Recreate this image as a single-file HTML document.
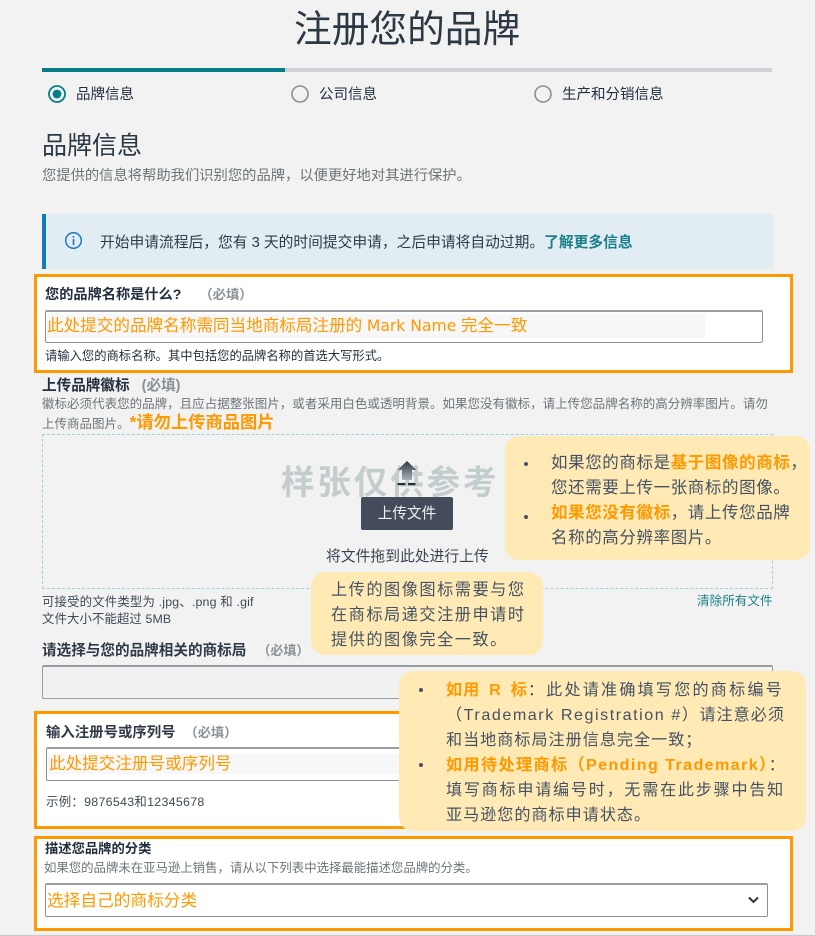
<!DOCTYPE html>
<html lang="zh-CN">
<head>
<meta charset="utf-8">
<title>注册您的品牌</title>
<style>
html,body{margin:0;padding:0;}
body{position:relative;width:815px;height:936px;overflow:hidden;background:#f2f2f2;font-family:"Liberation Sans","Noto Sans CJK SC",sans-serif;color:#232f3e;}
.t{position:absolute;white-space:nowrap;}
.b{position:absolute;box-sizing:border-box;}
.o{color:#ff9900;}
.box{position:absolute;box-sizing:border-box;border:3px solid #ff9900;background:#fff;}
.inp{position:absolute;box-sizing:border-box;background:#fff;border:1px solid #8d9096;border-top:2px solid #9a9da3;border-radius:2px;}
.req{color:#8a9299;font-weight:700;}
.note{position:absolute;box-sizing:border-box;background:#ffe9b5;border-radius:14px;color:#445263;}
.dot{position:absolute;width:4px;height:4px;border-radius:50%;background:#445263;}
.l{position:absolute;white-space:nowrap;font-size:16.1px;line-height:25px;color:#445263;left:446px;}
</style>
</head>
<body>
<div class="t" style="left:294px;top:2px;font-size:37.7px;line-height:54px;color:#2d3845;">注册您的品牌</div>

<div class="b" style="left:42px;top:68px;width:730px;height:4px;background:#cfd0d5;"></div>
<div class="b" style="left:42px;top:68px;width:243px;height:4px;background:#067d87;"></div>

<svg class="b" style="left:47px;top:84px;" width="20" height="20"><circle cx="10" cy="10" r="8" fill="none" stroke="#067d87" stroke-width="1.8"/><circle cx="10" cy="10" r="4.4" fill="#067d87"/></svg>
<div class="t" style="left:76px;top:85px;font-size:14.5px;line-height:20px;">品牌信息</div>
<svg class="b" style="left:290px;top:84px;" width="20" height="20"><circle cx="10" cy="10" r="8" fill="none" stroke="#8b8f94" stroke-width="1.6"/></svg>
<div class="t" style="left:319px;top:85px;font-size:14.5px;line-height:20px;">公司信息</div>
<svg class="b" style="left:533px;top:84px;" width="20" height="20"><circle cx="10" cy="10" r="8" fill="none" stroke="#8b8f94" stroke-width="1.6"/></svg>
<div class="t" style="left:562px;top:85px;font-size:14.5px;line-height:20px;">生产和分销信息</div>

<div class="t" style="left:42px;top:128px;font-size:25px;line-height:36px;color:#2d3845;">品牌信息</div>
<div class="t" style="left:42px;top:166px;font-size:14.3px;line-height:20px;color:#6c7478;">您提供的信息将帮助我们识别您的品牌，以便更好地对其进行保护。</div>

<div class="b" style="left:42px;top:214px;width:731px;height:55px;background:#e1ecf3;border-left:4px solid #1478bd;"></div>
<svg class="b" style="left:64px;top:231px;" width="19" height="19" fill="none"><circle cx="9.5" cy="9.5" r="7.8" stroke="#1b78bd" stroke-width="1.5"/><rect x="8.7" y="8" width="1.6" height="6" fill="#1b78bd"/><rect x="8.7" y="5" width="1.6" height="1.7" fill="#1b78bd"/></svg>
<div class="t" style="left:100px;top:233px;font-size:14.75px;line-height:20px;color:#2f3a46;">开始申请流程后，您有 3 天的时间提交申请，之后申请将自动过期。<span style="color:#1a7f8a;font-weight:700;">了解更多信息</span></div>

<!-- brand name box -->
<div class="box" style="left:34px;top:274px;width:759px;height:99px;"></div>
<div class="t" style="left:45px;top:285px;font-size:14.2px;line-height:20px;font-weight:700;">您的品牌名称是什么?<span class="req" style="margin-left:18px;font-size:13.3px;">（必填）</span></div>
<div class="inp" style="left:45px;top:310px;width:718px;height:33px;"></div>
<div class="b" style="left:47px;top:314px;width:658px;height:24px;background:#f7f7f7;"></div>
<div class="t o" style="left:47px;top:314px;font-size:16.6px;line-height:24px;">此处提交的品牌名称需同当地商标局注册的 <span style="font-family:'DejaVu Sans','Noto Sans CJK SC',sans-serif;font-size:15.6px;">Mark Name</span> 完全一致</div>
<div class="t" style="left:45px;top:347px;font-size:12.3px;line-height:18px;color:#232f3e;">请输入您的商标名称。其中包括您的品牌名称的首选大写形式。</div>

<!-- logo upload -->
<div class="t" style="left:42px;top:376px;font-size:14.6px;line-height:20px;font-weight:700;">上传品牌徽标<span class="req" style="margin-left:12px;">(必填)</span></div>
<div class="t" style="left:42px;top:395px;font-size:12.53px;line-height:18px;color:#6c7478;">徽标必须代表您的品牌，且应占据整张图片，或者采用白色或透明背景。如果您没有徽标，请上传您品牌名称的高分辨率图片。请勿</div>
<div class="t" style="left:42px;top:412px;font-size:12.53px;line-height:20px;color:#6c7478;">上传商品图片。<span class="o" style="font-size:17.3px;font-weight:700;">*请勿上传商品图片</span></div>

<div class="b" style="left:42px;top:434px;width:731px;height:155px;border:1px dashed #9fd0d8;"></div>
<div class="t" style="left:281px;top:462px;font-size:33.5px;line-height:44px;font-weight:700;letter-spacing:2.9px;color:#c4cdcd;">样张仅供参考</div>
<svg class="b" style="left:394px;top:459px;" width="26" height="28"><defs><linearGradient id="g" x1="0" y1="0" x2="0" y2="1"><stop offset="0" stop-color="#2f3845"/><stop offset="1" stop-color="#aab0b6"/></linearGradient></defs><path d="M13 2 L22.5 11 L18 11 L18 21 L8 21 L8 11 L3.5 11 Z" fill="url(#g)"/><rect x="3.5" y="24" width="8" height="2.2" fill="#232f3e"/><rect x="14" y="24" width="7.5" height="2.2" fill="#232f3e"/></svg>
<div class="b" style="left:361px;top:497px;width:92px;height:33px;background:#444c5c;border-radius:2px;"></div>
<div class="t" style="left:361px;top:504px;width:92px;text-align:center;font-size:14.6px;line-height:20px;color:#eef0f2;">上传文件</div>
<div class="t" style="left:326px;top:547px;font-size:14.8px;line-height:20px;color:#3b4552;">将文件拖到此处进行上传</div>

<div class="t" style="left:42px;top:594px;font-size:12.4px;line-height:17px;letter-spacing:.17px;color:#3f4955;">可接受的文件类型为 .jpg、.png 和 .gif</div>
<div class="t" style="left:42px;top:611px;font-size:12.4px;line-height:17px;letter-spacing:.1px;color:#3f4955;">文件大小不能超过 5MB</div>
<div class="t" style="left:697px;top:592px;font-size:12.6px;line-height:18px;color:#1a7f8a;">清除所有文件</div>

<div class="t" style="left:42px;top:641px;font-size:14.6px;line-height:20px;font-weight:700;color:#2f3a46;">请选择与您的品牌相关的商标局<span class="req" style="margin-left:11px;font-size:13px;">（必填）</span></div>
<div class="b" style="left:42px;top:665px;width:731px;height:34px;background:#f1f1f1;border:1px solid #9a9da3;border-top:2px solid #9a9da3;border-radius:2px;"></div>

<!-- registration box -->
<div class="box" style="left:34px;top:711px;width:759px;height:118px;"></div>
<div class="t" style="left:46px;top:723px;font-size:14.4px;line-height:20px;font-weight:700;color:#2f3a46;">输入注册号或序列号<span class="req" style="margin-left:9px;font-size:13.2px;">（必填）</span></div>
<div class="inp" style="left:46px;top:747px;width:500px;height:34px;"></div>
<div class="b" style="left:48px;top:754px;width:500px;height:20px;background:#f7f7f7;"></div>
<div class="t o" style="left:49px;top:752px;font-size:16.6px;line-height:24px;">此处提交注册号或序列号</div>
<div class="t" style="left:46px;top:792px;font-size:12.4px;line-height:20px;letter-spacing:.3px;color:#3f4955;">示例：9876543和12345678</div>

<!-- category box -->
<div class="box" style="left:34px;top:836px;width:759px;height:95px;"></div>
<div class="t" style="left:45px;top:840px;font-size:13.3px;line-height:18px;font-weight:700;">描述您品牌的分类</div>
<div class="t" style="left:44px;top:859px;font-size:12.4px;line-height:18px;color:#6c7478;">如果您的品牌未在亚马逊上销售，请从以下列表中选择最能描述您品牌的分类。</div>
<div class="inp" style="left:45px;top:883px;width:723px;height:34px;"></div>
<div class="t o" style="left:47px;top:889px;font-size:16.7px;line-height:24px;">选择自己的商标分类</div>
<svg class="b" style="left:747px;top:895px;" width="13" height="10" fill="none"><path d="M2 2.5 L6.5 7 L11 2.5" stroke="#2b3440" stroke-width="2"/></svg>
<div class="b" style="left:0;top:932px;width:815px;height:4px;background:linear-gradient(#f2f2f2,#f2f2f2 60%,#b9b9b9);"></div>

<!-- notes -->
<div class="note" style="left:505px;top:436px;width:305px;height:124px;"></div>
<div class="dot" style="left:524px;top:462px;"></div>
<div class="dot" style="left:524px;top:515px;"></div>
<div class="t" style="left:551px;top:451px;font-size:16.5px;line-height:25px;letter-spacing:.6px;color:#445263;">如果您的商标是<span class="o" style="font-weight:700;">基于图像的商标</span>，<br>您还需要上传一张商标的图像。<br><span class="o" style="font-weight:700;">如果您没有徽标</span>，请上传您品牌<br>名称的高分辨率图片。</div>

<div class="note" style="left:311px;top:572px;width:232px;height:83px;"></div>
<div class="t" style="left:331px;top:578px;font-size:16.2px;line-height:25px;letter-spacing:1.5px;color:#445263;">上传的图像图标需要与您<br>在商标局递交注册申请时<br>提供的图像完全一致。</div>

<div class="note" style="left:399px;top:671px;width:407px;height:160px;"></div>
<div class="dot" style="left:419px;top:688px;"></div>
<div class="dot" style="left:419px;top:763px;"></div>
<div class="l" style="top:678px;letter-spacing:2.2px;"><span class="o" style="font-weight:700;letter-spacing:1px;word-spacing:3.5px;">如用 R 标</span>：此处请准确填写您的商标编号</div>
<div class="l" style="top:703px;letter-spacing:1.55px;">（Trademark Registration #）<span style="letter-spacing:1px;">请注意必须</span></div>
<div class="l" style="top:728px;letter-spacing:1px;">和当地商标局注册信息完全一致；</div>
<div class="l" style="top:753px;letter-spacing:1.4px;"><span class="o" style="font-weight:700;">如用待处理商标（Pending Trademark）</span>：</div>
<div class="l" style="top:778px;letter-spacing:1.75px;">填写商标申请编号时，无需在此步骤中告知</div>
<div class="l" style="top:803px;letter-spacing:1px;">亚马逊您的商标申请状态。</div>
</body>
</html>
